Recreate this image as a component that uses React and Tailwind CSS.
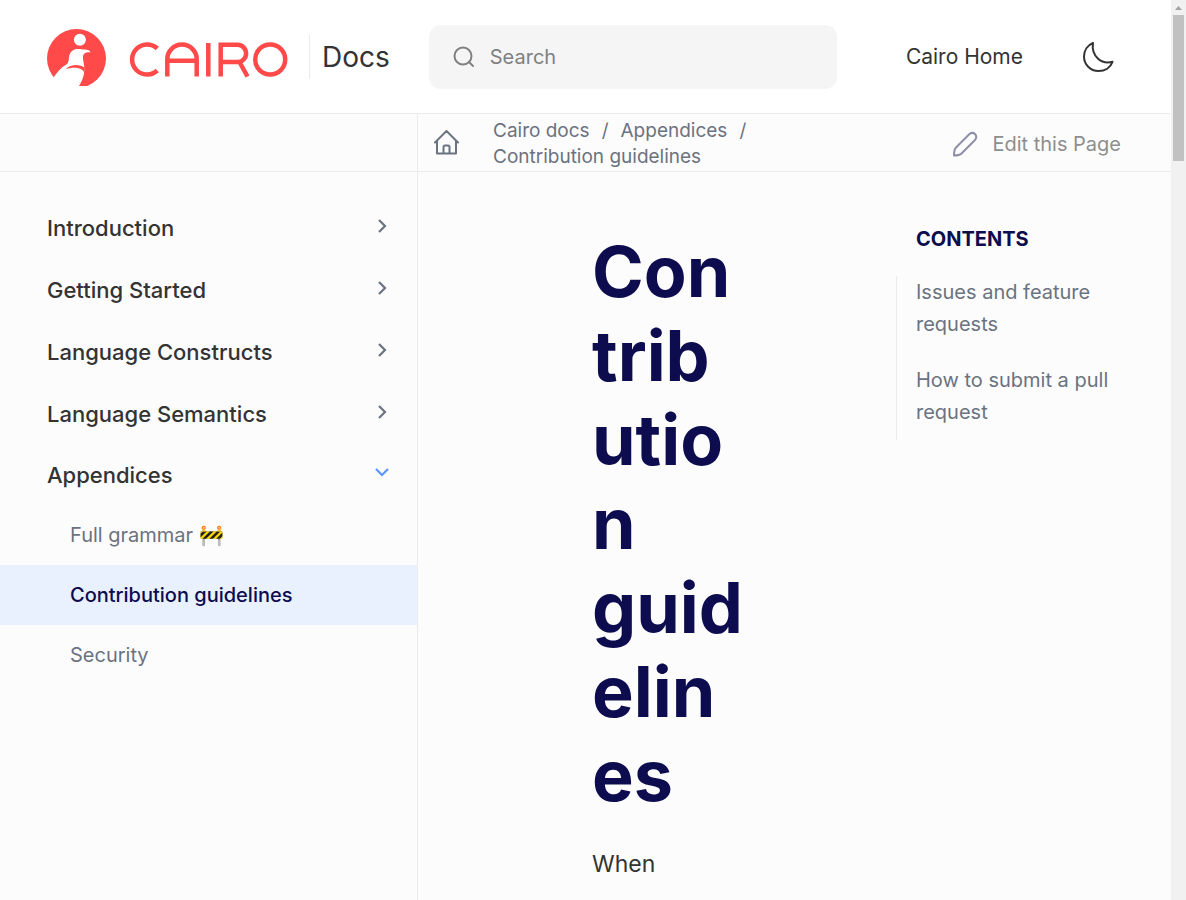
import React from "react";

const sections = ["Introduction", "Getting Started", "Language Constructs", "Language Semantics"];
const pages = [
  { label: "Full grammar 🚧" },
  { label: "Contribution guidelines", current: true },
  { label: "Security" },
];

function Logo() {
  return (
    <svg viewBox="0 0 242 57" className="mt-0.5 h-[57px] w-[242px]" role="img" aria-label="Cairo">
      <circle cx="29.5" cy="29.5" r="29.5" fill="#ff4a49" />
      <circle cx="32.9" cy="10.7" r="6" fill="#fff" />
      <path d="M6.300 48.900 C9 45 11.500 41.500 14.700 38.700 C18.500 35.500 21 36 21.800 30.500 C22.300 25 23 22.500 28.200 20.300 C31 19.600 35 20.600 38 20.600 C41 20.600 43 21.500 43.400 23.500 C39.500 22.600 36.600 24 36 27 C35.500 31 37.800 35 37.300 42 C37 48 34.500 53 32 57 L0 57 Z" fill="#fff" />
      <path d="M18.500 40.200 C24 35 32.500 34.800 37.500 38.500 L37.300 43.500 C35.500 38.500 27 37.300 18.500 40.200 Z" fill="#ff4a49" />
      <g fill="none" stroke="#ff4a49" strokeWidth="4.500">
        <path d="M110.300 19.500 A15 15 0 1 0 110.300 41.500" />
        <path d="M120.300 47.500 V30.300 A14.700 14.700 0 0 1 149.700 30.300 V47.500 M120.300 31.800 H149.700" />
        <path d="M161.300 14 V47.500" />
        <path d="M173.700 47.500 V15.800 H190.500 A8.500 8.500 0 0 1 190.500 33 H173.700 M192.500 33 L200.500 47.500" />
        <circle cx="223.200" cy="30.500" r="15" />
      </g>
    </svg>
  );
}

function Header() {
  return (
    <header className="flex h-[114px] items-center border-b border-[#ebebeb] bg-white pl-[47px] pr-[57px]">
      <a href="#" className="flex items-center">
        <Logo />
        <span className="ml-5 flex h-11 items-center border-l border-[#ebebeb] pl-3 text-[28px] leading-none text-[#333]">Docs</span>
      </a>
      <label className="ml-[39px] flex h-16 w-[408px] items-center gap-[15px] rounded-xl bg-[#f5f5f5] pl-6">
        <svg viewBox="0 0 22 22" className="h-[22px] w-[22px]" fill="none" stroke="#808080" strokeWidth="2">
          <circle cx="10" cy="10" r="8.500" />
          <path d="M16 16 L20 20" strokeLinecap="round" />
        </svg>
        <input type="search" aria-label="Search" placeholder="Search" className="min-w-0 flex-1 bg-transparent text-xl text-[#333] outline-none placeholder:text-[#808080]" />
      </label>
      <a href="#" className="ml-auto text-[21px] text-[#333]">Cairo Home</a>
      <button type="button" aria-label="Toggle theme" className="ml-[59px]">
        <svg viewBox="0 0 32 32" className="h-8 w-8" fill="none" stroke="#333" strokeWidth="2" strokeLinejoin="round">
          <path d="M11 2 C5.500 4.200 2 9.500 2 15.500 C2 23.500 8.300 30 16.500 30 C23 30 28.500 26.500 30.500 20.800 C19.500 24 9 15 11 2 Z" />
        </svg>
      </button>
    </header>
  );
}

function Sidebar() {
  return (
    <nav className="w-[418px] shrink-0 border-r border-[#ebebeb]">
      <div className="h-[58px] border-b border-[#ebebeb]" />
      <ul className="pt-[25px]">
        {sections.map((s) => (
          <li key={s}>
            <button type="button" className="flex h-[62px] w-full items-center justify-between pl-[47px] pr-[27px] text-[22px] font-medium text-[#333]">
              {s}
              <svg viewBox="0 0 16 16" className="mb-1 h-4 w-4" fill="none" stroke="#6b7280" strokeWidth="2.200"><path d="M5 2 L11 8 L5 14" /></svg>
            </button>
          </li>
        ))}
        <li>
          <button type="button" aria-expanded="true" className="flex h-[60px] w-full items-center justify-between pl-[47px] pr-[27px] text-[22px] font-medium text-[#333]">
            Appendices
            <svg viewBox="0 0 16 16" className="mb-1.5 h-4 w-4" fill="none" stroke="#5c94ff" strokeWidth="2.200"><path d="M2 5 L8 11 L14 5" /></svg>
          </button>
          <ul>
            {pages.map((p) => (
              <li key={p.label}>
                <a href="#" aria-current={p.current ? "page" : undefined} className={p.current ? "flex h-[60px] items-center bg-[#e9f1ff] pl-[70px] text-xl font-medium text-[#0c0c4f]" : "flex h-[60px] items-center pl-[70px] text-xl text-[#6b7280]"}>
                  {p.label}
                </a>
              </li>
            ))}
          </ul>
        </li>
      </ul>
    </nav>
  );
}

function Toolbar() {
  return (
    <div className="flex h-[58px] items-center border-b border-[#ebebeb] pl-[15px] pr-[50px]">
      <a href="#" aria-label="Home">
        <svg viewBox="0 0 28 28" className="h-7 w-7" fill="none" stroke="#6b7280" strokeWidth="2" strokeLinejoin="round" strokeLinecap="round">
          <path d="M2 13.500 L13.500 2 L25 13.500 M4 12 V24.500 H23 V12 M10.500 24.500 V18 Q10.500 16.500 12 16.500 H15 Q16.500 16.500 16.500 18 V24.500" />
        </svg>
      </a>
      <nav aria-label="Breadcrumbs" className="ml-8 w-[300px] pt-0.5 text-[19px] leading-[26px] text-[#6b7280]">
        <a href="#">Cairo docs</a><span className="mx-3">/</span>
        <a href="#">Appendices</a><span className="mx-3">/</span>{" "}
        <a href="#">Contribution guidelines</a>
      </nav>
      <a href="#" className="ml-auto flex items-center gap-3.5 pt-0.5 text-xl text-[#8e8e8e]">
        <svg viewBox="0 0 26 26" className="h-[26px] w-[26px]" fill="none" stroke="#8e8ea8" strokeWidth="2" strokeLinejoin="round">
          <path d="M2 24.500 C2 21 2 18.500 4 16.500 L17.500 3 Q20.500 .700 23 3 Q25.500 5.800 23 9 L9.500 22.500 C7.500 24.500 5 24.500 2 24.500 Z" />
        </svg>
        Edit this Page
      </a>
    </div>
  );
}

function Contents() {
  return (
    <aside className="w-[275px] shrink-0 pt-[54px]">
      <h2 className="pl-5 text-xl leading-[26px] font-bold text-[#0c0c4f]">CONTENTS</h2>
      <ul className="mt-6 flex flex-col gap-6 border-l border-[#ebebeb] pr-14 pl-[19px] text-xl leading-8 text-[#6b7280]">
        <li><a href="#">Issues and feature requests</a></li>
        <li className="pb-3"><a href="#">How to submit a pull request</a></li>
      </ul>
    </aside>
  );
}

function Scrollbar() {
  return (
    <div aria-hidden="true" className="flex w-[15px] shrink-0 flex-col items-center bg-[#f1f1f1]">
      <svg viewBox="0 0 15 15" className="h-[15px] w-[15px]" fill="#a3a3a3"><path d="M4 10 L7.500 6 L11 10 Z" /></svg>
      <div className="h-[146px] w-[11px] bg-[#c1c1c1]" />
    </div>
  );
}

export default function App() {
  return (
    <div className="flex h-screen overflow-hidden bg-[#fcfcfc] font-['Inter',sans-serif]">
      <div className="flex min-w-0 flex-1 flex-col">
        <Header />
        <div className="flex min-h-0 flex-1">
          <Sidebar />
          <div className="min-w-0 flex-1">
            <Toolbar />
            <div className="flex">
              <main className="min-w-0 flex-1 pt-[58px] pr-[152px] pl-[174px]">
                <h1 className="text-[70px] leading-[84px] font-bold wrap-anywhere text-[#0c0c4f]">Contribution guidelines</h1>
                <p className="mt-7 text-[23px] leading-9 text-[#333]">When</p>
              </main>
              <Contents />
            </div>
          </div>
        </div>
      </div>
      <Scrollbar />
    </div>
  );
}
